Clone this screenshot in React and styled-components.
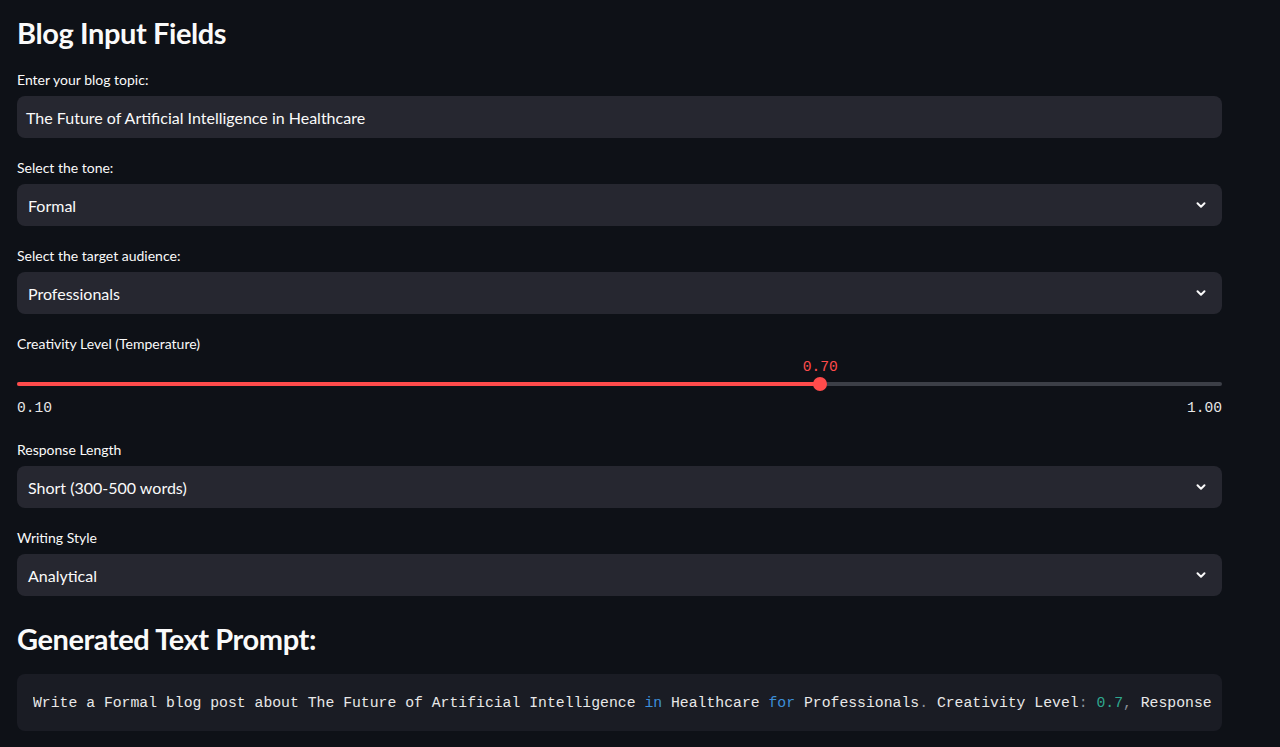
import React from "react";
import styled, { createGlobalStyle } from "styled-components";

const GlobalStyle = createGlobalStyle`
  html, body {
    margin: 0;
    padding: 0;
    background: #0e1117;
    color: #fafafa;
    font-family: Lato, "Open Sans", sans-serif;
  }
`;

const Page = styled.div`
  width: 1205px;
  padding: 0 0 0 17px;
  display: flex;
  flex-direction: column;
`;

const Title = styled.h2`
  margin: 0;
  padding-top: 14px;
  height: 44px;
  font-size: 29px;
  font-weight: 700;
  line-height: 38px;
  letter-spacing: -0.4px;
`;

const Field = styled.div`
  display: flex;
  flex-direction: column;
  margin-top: ${(p) => p.$top || 16}px;
`;

const Label = styled.label`
  font-size: 14px;
  line-height: 20px;
  height: 20px;
  margin-bottom: 6px;
  color: #fafafa;
`;

const Box = styled.div`
  height: 42px;
  border-radius: 8px;
  background: #262730;
  display: flex;
  align-items: center;
  justify-content: space-between;
  padding: 0 ${(p) => (p.$select ? 14 : 9)}px 0 ${(p) => (p.$select ? 11 : 9)}px;
  font-size: 16px;
  color: #fafafa;
`;

const SliderWrap = styled.div`
  position: relative;
  height: 37px;
`;

const Track = styled.div`
  position: absolute;
  left: 0;
  right: 0;
  top: 22px;
  height: 4px;
  border-radius: 2px;
  background: #3c3f47;
`;

const Fill = styled.div`
  position: absolute;
  left: 0;
  top: 0;
  bottom: 0;
  border-radius: 2px;
  background: #ff4b4b;
`;

const Thumb = styled.div`
  position: absolute;
  top: 17px;
  width: 14px;
  height: 14px;
  margin-left: -7px;
  border-radius: 50%;
  background: #ff4b4b;
`;

const Mono = styled.span`
  font-family: "Liberation Mono", "DejaVu Sans Mono", monospace;
  font-size: 14.6px;
`;

const ValueTip = styled(Mono)`
  position: absolute;
  top: -1px;
  transform: translateX(-50%);
  color: #ff4b4b;
`;

const Ends = styled.div`
  display: flex;
  justify-content: space-between;
  color: #e6e6e6;
  line-height: 22px;
  height: 22px;
`;

const Heading = styled.h2`
  margin: 24px 0 0;
  font-size: 29px;
  font-weight: 700;
  line-height: 38px;
  letter-spacing: -0.4px;
`;

const Code = styled.pre`
  margin: 16px 0 0;
  height: 57px;
  border-radius: 8px;
  background: #1a1c24;
  padding: 0 8px 0 16px;
  display: flex;
  align-items: center;
  font-family: "Liberation Mono", "DejaVu Sans Mono", monospace;
  font-size: 14.77px;
  color: #e8e8e8;
  white-space: pre;
`;

const CodeLine = styled.code`
  flex: 1;
  overflow: hidden;
  font: inherit;
`;

const Kw = styled.span`
  color: ${(p) => p.$c};
`;

const Chevron = () => (
  <svg width="14" height="14" viewBox="0 0 24 24" fill="none" stroke="#fafafa" strokeWidth="3.4" strokeLinecap="round" strokeLinejoin="round">
    <path d="M6 9l6 6 6-6" />
  </svg>
);

const SelectField = ({ label, value, top }) => (
  <Field $top={top}>
    <Label>{label}</Label>
    <Box $select>
      <span>{value}</span>
      <Chevron />
    </Box>
  </Field>
);

export default function App() {
  const min = 0.1;
  const max = 1.0;
  const val = 0.7;
  const pct = ((val - min) / (max - min)) * 100;

  return (
    <>
      <GlobalStyle />
      <Page>
        <Title>Blog Input Fields</Title>
        <Field $top={12}>
          <Label>Enter your blog topic:</Label>
          <Box>The Future of Artificial Intelligence in Healthcare</Box>
        </Field>
        <SelectField label="Select the tone:" value="Formal" top={20} />
        <SelectField label="Select the target audience:" value="Professionals" top={20} />
        <Field $top={20}>
          <Label>Creativity Level (Temperature)</Label>
          <SliderWrap>
            <Track>
              <Fill style={{ width: `${pct}%` }} />
            </Track>
            <Thumb style={{ left: `${pct}%` }} />
            <ValueTip style={{ left: `${pct}%` }}>0.70</ValueTip>
          </SliderWrap>
          <Ends>
            <Mono>0.10</Mono>
            <Mono>1.00</Mono>
          </Ends>
        </Field>
        <SelectField label="Response Length" value="Short (300-500 words)" top={21} />
        <SelectField label="Writing Style" value="Analytical" top={20} />
        <Heading>Generated Text Prompt:</Heading>
        <Code>
          <CodeLine>
            Write a Formal blog post about The Future of Artificial Intelligence <Kw $c="#3d8fd9">in</Kw> Healthcare <Kw $c="#3d8fd9">for</Kw> Professionals<Kw $c="#8a8f98">.</Kw> Creativity Level<Kw $c="#8a8f98">:</Kw>{" "}<Kw $c="#2fa88f">0.7</Kw><Kw $c="#8a8f98">,</Kw> Response Length<Kw $c="#8a8f98">:</Kw> Short (300-500 words)
          </CodeLine>
        </Code>
      </Page>
    </>
  );
}
